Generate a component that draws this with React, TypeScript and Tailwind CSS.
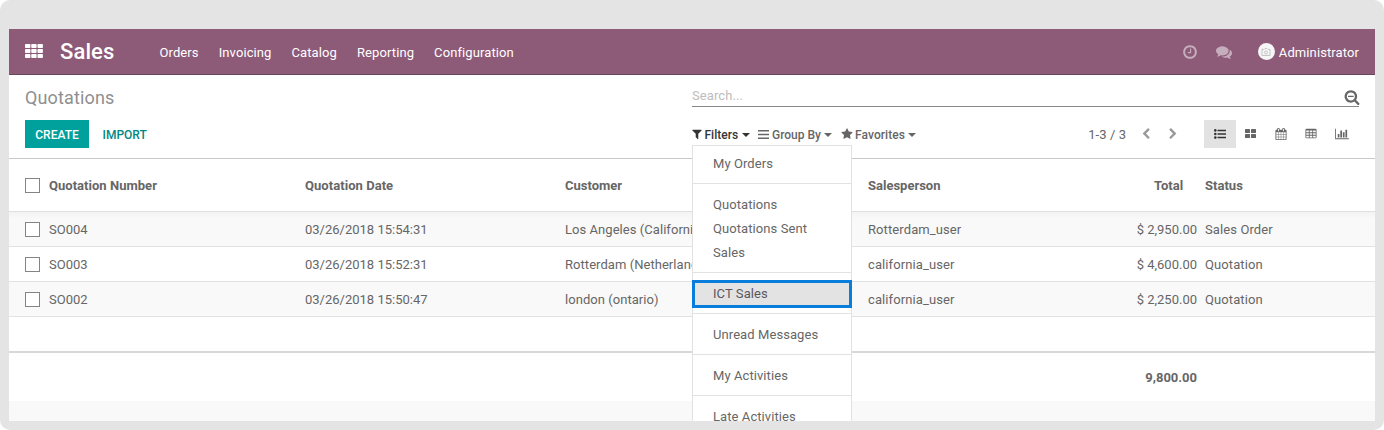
import React from "react";

type IconProps = { d: string; className?: string; viewBox?: string };

function Icon({ d, className = "", viewBox = "0 0 1792 1792" }: IconProps) {
  return (
    <svg viewBox={viewBox} className={`shrink-0 fill-current ${className}`} aria-hidden="true">
      <path d={d} fillRule="evenodd" />
    </svg>
  );
}

const icons = {
  filter:
    "M1595 295q17 41-14 70l-493 493v742q0 42-39 59-13 5-25 5-27 0-45-19l-256-256q-19-19-19-45v-486l-493-493q-31-29-14-70 17-39 59-39h1280q42 0 59 39z",
  star: "M1728 647q0 22-26 48l-363 354 86 500q1 7 1 20 0 21-10.5 35.5t-30.5 14.5q-19 0-40-12l-449-236-449 236q-22 12-40 12-21 0-31.5-14.5t-10.5-35.5q0-6 2-20l86-500-364-354q-25-27-25-48 0-37 56-46l502-73 225-455q19-41 49-41t49 41l225 455 502 73q56 9 56 46z",
  clock:
    "M1024 544v448q0 14-9 23t-23 9h-320q-14 0-23-9t-9-23v-64q0-14 9-23t23-9h224v-352q0-14 9-23t23-9h64q14 0 23 9t9 23zm416 352q0-148-73-273t-198-198-273-73-273 73-198 198-73 273 73 273 198 198 273 73 273-73 198-198 73-273zm224 0q0 209-103 385.5t-279.5 279.5-385.5 103-385.5-103-279.5-279.5-103-385.5 103-385.5 279.5-279.5 385.5-103 385.5 103 279.5 279.5 103 385.5z",
  comments:
    "M1408 768q0 139-94 257t-256.5 186.5-353.5 68.5q-86 0-176-16-124 88-278 128-36 9-86 16h-3q-11 0-20.5-8t-11.5-21q-1-3-1-6.5t.5-6.5 2-6l2.5-5 3.5-5.5 4-5 4.5-5 4-4.5q5-6 23-25t26-29.5 22.5-29 25-38.5 20.5-44q-124-72-195-177t-71-224q0-139 94-257t256.5-186.5 353.5-68.5 353.5 68.5 256.5 186.5 94 257zm384 256q0 120-71 224.5t-195 176.5q10 24 20.5 44t25 38.5 22.5 29 26 29.5 23 25q1 1 4 4.5t4.5 5 4 5 3.5 5.5l2.5 5 2 6 .5 6.5-1 6.5q-3 14-13 22t-22 7q-50-7-86-16-154-40-278-128-90 16-176 16-271 0-472-132 58 4 88 4 161 0 309-45t264-129q125-92 192-212t67-254q0-77-23-152 129 71 204 178t75 230z",
  searchMinus:
    "M1088 800v64q0 13-9.5 22.5t-22.5 9.5h-576q-13 0-22.5-9.5t-9.5-22.5v-64q0-13 9.5-22.5t22.5-9.5h576q13 0 22.5 9.5t9.5 22.5zm128 32q0-185-131.5-316.5t-316.5-131.5-316.5 131.5-131.5 316.5 131.5 316.5 316.5 131.5 316.5-131.5 131.5-316.5zm512 832q0 53-37.5 90.5t-90.5 37.5q-54 0-90-38l-343-342q-179 124-399 124-143 0-273.5-55.5t-225-150-150-225-55.5-273.5 55.5-273.5 150-225 225-150 273.5-55.5 273.5 55.5 225 150 150 225 55.5 273.5q0 220-124 399l343 343q37 37 37 90z",
  chevron:
    "M1427 301l-531 531 531 531q19 19 19 45t-19 45l-166 166q-19 19-45 19t-45-19l-742-742q-19-19-19-45t19-45l742-742q19-19 45-19t45 19l166 166q19 19 19 45t-19 45z",
  calendar:
    "M192 1664h288v-288h-288v288zm352 0h320v-288h-320v288zm-352-352h288v-320h-288v320zm352 0h320v-320h-320v320zm-352-384h288v-288h-288v288zm736 736h320v-288h-320v288zm-384-736h320v-288h-320v288zm768 736h288v-288h-288v288zm-384-352h320v-320h-320v320zm-352-864v-288q0-13-9.5-22.5t-22.5-9.5h-64q-13 0-22.5 9.5t-9.5 22.5v288q0 13 9.5 22.5t22.5 9.5h64q13 0 22.5-9.5t9.5-22.5zm736 864h288v-320h-288v320zm-384-384h320v-288h-320v288zm384 0h288v-288h-288v288zm32-480v-288q0-13-9.5-22.5t-22.5-9.5h-64q-13 0-22.5 9.5t-9.5 22.5v288q0 13 9.5 22.5t22.5 9.5h64q13 0 22.5-9.5t9.5-22.5zm384-64v1280q0 52-38 90t-90 38h-1408q-52 0-90-38t-38-90v-1280q0-52 38-90t90-38h128v-96q0-66 47-113t113-47h64q66 0 113 47t47 113v96h384v-96q0-66 47-113t113-47h64q66 0 113 47t47 113v96h128q52 0 90 38t38 90z",
  table:
    "M224 128h1344q160 0 160 160v1088q0 160-160 160h-1344q-160 0-160-160v-1088q0-160 160-160zM192 384v256h384v-256zM704 384v256h384v-256zM1216 384v256h384v-256zM192 768v256h384v-256zM704 768v256h384v-256zM1216 768v256h384v-256zM192 1152v256h384v-256zM704 1152v256h384v-256zM1216 1152v256h384v-256z",
  chart:
    "M640 896v512h-256v-512h256zm384-512v1024h-256v-1024h256zm1024 1152v128h-2048v-1536h128v1408h1920zm-640-896v768h-256v-768h256zm384-384v1152h-256v-1152h256z",
};

function Caret() {
  return (
    <svg viewBox="0 0 8 4" className="mt-[2px] h-[4px] w-[8px] fill-current" aria-hidden="true">
      <path d="M0 0h8L4 4z" />
    </svg>
  );
}

function Checkbox() {
  return <span className="-mt-[2px] block h-[15px] w-[15px] border border-[#848484] bg-white" />;
}

const rows = [
  ["SO004", "03/26/2018 15:54:31", "Los Angeles (California)", "Rotterdam_user", "$ 2,950.00", "Sales Order"],
  ["SO003", "03/26/2018 15:52:31", "Rotterdam (Netherlands)", "california_user", "$ 4,600.00", "Quotation"],
  ["SO002", "03/26/2018 15:50:47", "london (ontario)", "california_user", "$ 2,250.00", "Quotation"],
];

const filterGroups = [
  ["My Orders"],
  ["Quotations", "Quotations Sent", "Sales"],
  ["ICT Sales"],
  ["Unread Messages"],
  ["My Activities"],
  ["Late Activities"],
];

const columns = "grid grid-cols-[24px_256px_260px_303px_329px_1fr] items-center pt-[2px] pl-4 whitespace-nowrap";

function FilterMenu() {
  return (
    <div className="absolute top-[25px] left-0 z-10 w-[160px] border border-[#e2e2e2] bg-white pt-[5px] pb-2 font-normal tracking-[0.08px] text-[#666]">
      {filterGroups.map((group, i) => (
        <div key={group[0]} className={i > 0 ? "mt-2 border-t border-[#e2e2e2] pt-2" : ""}>
          {group.map((item) =>
            item === "ICT Sales" ? (
              <div
                key={item}
                className="-mx-px -mt-px -mb-[3px] flex h-7 items-center border-[3px] border-[#087ddb] bg-[#e3e3e3] pb-px pl-[18px] text-[#5b5560]"
              >
                {item}
              </div>
            ) : (
              <div key={item} className="flex h-6 items-center pt-[2px] pl-5">
                {item}
              </div>
            ),
          )}
        </div>
      ))}
    </div>
  );
}

export default function App() {
  return (
    <div className="h-[430px] w-[1384px] overflow-hidden rounded-[10px] bg-[#e4e4e4] px-[9px] pt-[29px] pb-[9px] font-[Roboto,sans-serif] text-[13px] leading-5 text-[#666]">
      <div className="flex h-[392px] flex-col overflow-hidden bg-white">
        <header className="flex h-[46px] shrink-0 items-center border-b border-[#68465f] bg-[#8d5a78] pr-4 pl-4 text-white">
          <svg viewBox="0 0 18 14" className="-mt-px h-[14px] w-[18px] fill-current" aria-hidden="true">
            {[0, 5, 10].map((y) =>
              [0, 6.25, 12.5].map((x) => <rect key={`${x}-${y}`} x={x} y={y} width="5.4" height="4" rx="0.8" />),
            )}
          </svg>
          <span className="ml-[17px] w-[99.5px] text-[22px] leading-6 font-medium tracking-[0.1px]">Sales</span>
          <nav className="flex gap-5 pt-[2px] tracking-[0.1px]">
            <span>Orders</span>
            <span>Invoicing</span>
            <span>Catalog</span>
            <span>Reporting</span>
            <span>Configuration</span>
          </nav>
          <div className="ml-auto flex items-center">
            <Icon d={icons.clock} className="h-4 w-4 opacity-50" />
            <Icon d={icons.comments} className="ml-[18px] h-4 w-4 opacity-50" />
            <span className="ml-[26px] flex h-[17px] w-[17px] items-center justify-center rounded-full bg-[#f6f6f6]">
              <svg viewBox="0 0 10 8" className="h-[8px] w-[10px] fill-none stroke-[#c5c5c5]" aria-hidden="true">
                <path d="M1 1.5h2l1-1h2l1 1h2v6H1zM1 .5l1.5 1.5" />
                <circle cx="5" cy="4.5" r="1.5" />
              </svg>
            </span>
            <span className="ml-1 pt-[2px] tracking-[0.1px]">Administrator</span>
          </div>
        </header>

        <section className="flex h-[84px] shrink-0 border-b border-[#c8c8c8] pr-4 pl-4">
          <div className="w-[667px]">
            <h1 className="pt-[11px] text-[18px] leading-6 tracking-[0.14px] text-[#8f8f8f]">Quotations</h1>
            <div className="mt-[10px] flex h-7 items-center text-[12px] font-medium">
              <button className="h-7 w-16 bg-[#00a09d] pt-[2px] text-white">CREATE</button>
              <button className="ml-[13.5px] pt-[2px] text-[#008784]">IMPORT</button>
            </div>
          </div>
          <div className="flex-1">
            <div className="mt-[11px] flex h-[21px] items-center justify-between border-b border-[#888]">
              <span className="tracking-[0.1px] text-[#bdbdbd]">Search...</span>
              <Icon d={icons.searchMinus} className="-mr-[0.5px] mt-[2px] h-4 w-4" />
            </div>
            <div className="mt-[13px] flex h-7 items-center">
              <div className="relative flex h-7 items-center text-[12px] font-medium">
                <span className="flex w-[66px] items-center text-[#333]">
                  <Icon d={icons.filter} className="-ml-px mr-[1.5px] h-[12px] w-[12px]" />
                  <span className="mr-1 pt-[2px]">Filters</span>
                  <Caret />
                </span>
                <span className="flex w-[83px] items-center">
                  <svg viewBox="0 0 11 9" className="mr-[3px] h-[9px] w-[11px] fill-current" aria-hidden="true">
                    <path d="M0 0h11v1.4H0zM0 3.8h11v1.4H0zM0 7.6h11V9H0z" />
                  </svg>
                  <span className="mr-[3px] pt-[2px]">Group By</span>
                  <Caret />
                </span>
                <span className="flex items-center">
                  <Icon d={icons.star} className="mr-[2px] h-[12px] w-[12px]" />
                  <span className="mr-[3px] pt-[2px] tracking-[0.08px]">Favorites</span>
                  <Caret />
                </span>
                <div className="absolute top-0 left-0 text-[13px]">
                  <FilterMenu />
                </div>
              </div>
              <div className="ml-auto flex items-center">
                <span className="pt-[2px] tracking-[0.06px]">1-3 / 3</span>
                <Icon d={icons.chevron} className="ml-[14px] h-3 w-3 text-[#999]" />
                <Icon d={icons.chevron} className="ml-[15px] h-3 w-3 -scale-x-100 text-[#999]" />
                <div className="ml-[25px] flex">
                  <span className="flex h-7 w-8 items-center justify-center bg-[#e2e2e2] text-[#333]">
                    <svg viewBox="0 0 12 10" className="h-[10px] w-[12px] fill-current" aria-hidden="true">
                      <circle cx="1.3" cy="1.4" r="1.3" />
                      <circle cx="1.3" cy="5" r="1.3" />
                      <circle cx="1.3" cy="8.6" r="1.3" />
                      <path d="M3.5 .7H12v1.5H3.5zM3.5 4.2H12v1.5H3.5zM3.5 7.8H12v1.5H3.5z" />
                    </svg>
                  </span>
                  <span className="flex h-7 w-[29px] items-center justify-center pb-px">
                    <svg viewBox="0 0 11 9" className="h-[9px] w-[11px] fill-current" aria-hidden="true">
                      <rect width="5" height="4" rx=".6" />
                      <rect x="6" width="5" height="4" rx=".6" />
                      <rect y="5" width="5" height="4" rx=".6" />
                      <rect x="6" y="5" width="5" height="4" rx=".6" />
                    </svg>
                  </span>
                  <span className="flex h-7 w-[31px] items-center justify-center">
                    <Icon d={icons.calendar} className="h-3 w-3" />
                  </span>
                  <span className="flex h-7 w-[30px] items-center justify-center pb-px">
                    <Icon d={icons.table} className="h-3 w-3" />
                  </span>
                  <span className="flex h-7 w-[33px] items-center justify-center pr-[2px] pb-px">
                    <Icon d={icons.chart} viewBox="0 0 2048 1792" className="h-3 w-[14px]" />
                  </span>
                </div>
              </div>
            </div>
          </div>
        </section>

        <div className={`${columns} h-[53px] shrink-0 border-b border-[#e0e0e0] font-bold`}>
          <Checkbox />
          <span className="tracking-[0.03px]">Quotation Number</span>
          <span className="tracking-[0.05px]">Quotation Date</span>
          <span>Customer</span>
          <span>Salesperson</span>
          <span className="-ml-[14px] flex gap-[22px]">
            <span className="-ml-[29px]">Total</span>
            <span>Status</span>
          </span>
        </div>
        {rows.map((row, i) => (
          <div
            key={row[0]}
            className={`${columns} h-[35px] shrink-0 border-b border-[#e2e2e2] ${
              i === 0
                ? "bg-[#f9f9f9] bg-linear-to-b from-[#f3f3f3] to-[#f9f9f9] to-20%"
                : i === 2
                  ? "bg-[#f9f9f9]"
                  : "bg-white"
            }`}
          >
            <Checkbox />
            <span>{row[0]}</span>
            <span>{row[1]}</span>
            <span className="tracking-[0.05px]">{row[2]}</span>
            <span className="flex justify-between">
              <span className="tracking-[0.1px]">{row[3]}</span>
              <span>{row[4]}</span>
            </span>
            <span className="pl-2 tracking-[0.1px]">{row[5]}</span>
          </div>
        ))}
        <div className="h-9 shrink-0 border-b-2 border-[#d8d8d8]" />
        <div className="flex h-[48px] shrink-0 items-center justify-end pt-[2px] pr-[178px] font-bold">9,800.00</div>
        <div className="flex-1 bg-[#f9f9f9]" />
      </div>
    </div>
  );
}
